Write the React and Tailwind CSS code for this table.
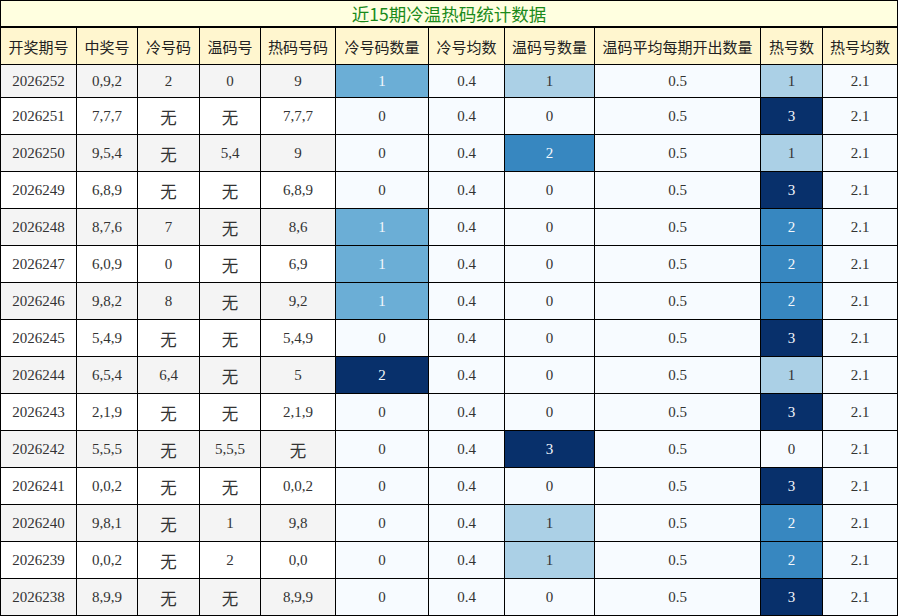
import React from "react";

const rows = [
  ["2026252", "0,9,2", "2", "0", "9", 1, 1, 1],
  ["2026251", "7,7,7", "无", "无", "7,7,7", 0, 0, 3],
  ["2026250", "9,5,4", "无", "5,4", "9", 0, 2, 1],
  ["2026249", "6,8,9", "无", "无", "6,8,9", 0, 0, 3],
  ["2026248", "8,7,6", "7", "无", "8,6", 1, 0, 2],
  ["2026247", "6,0,9", "0", "无", "6,9", 1, 0, 2],
  ["2026246", "9,8,2", "8", "无", "9,2", 1, 0, 2],
  ["2026245", "5,4,9", "无", "无", "5,4,9", 0, 0, 3],
  ["2026244", "6,5,4", "6,4", "无", "5", 2, 0, 1],
  ["2026243", "2,1,9", "无", "无", "2,1,9", 0, 0, 3],
  ["2026242", "5,5,5", "无", "5,5,5", "无", 0, 3, 0],
  ["2026241", "0,0,2", "无", "无", "0,0,2", 0, 0, 3],
  ["2026240", "9,8,1", "无", "1", "9,8", 0, 1, 2],
  ["2026239", "0,0,2", "无", "2", "0,0", 0, 1, 2],
  ["2026238", "8,9,9", "无", "无", "8,9,9", 0, 0, 3],
];

const headers = [
  "开奖期号",
  "中奖号",
  "冷号码",
  "温码号",
  "热码号码",
  "冷号码数量",
  "冷号均数",
  "温码号数量",
  "温码平均每期开出数量",
  "热号数",
  "热号均数",
];

const coldMap = {
  0: "bg-[#f7fbff] text-[#333]",
  1: "bg-[#6baed6] text-[#f4f8fc]",
  2: "bg-[#08306b] text-[#f4f8fc]",
};

const warmMap = {
  0: "bg-[#f7fbff] text-[#333]",
  1: "bg-[#abd0e6] text-[#333]",
  2: "bg-[#3787c0] text-[#f4f8fc]",
  3: "bg-[#08306b] text-[#f4f8fc]",
};

const serif = "font-['Liberation_Serif','Noto_Sans_CJK_SC',serif]";

function Cell({ children, className }) {
  return (
    <div className={`flex items-center justify-center ${serif} text-[15px] ${className}`}>
      {children}
    </div>
  );
}

function Txt({ v }) {
  if (v === "无") {
    return <span className="font-['Noto_Sans_CJK_SC',sans-serif] text-[16.5px] text-[#333] leading-none mt-[3px]">无</span>;
  }
  return <span>{v}</span>;
}

export default function App() {
  return (
    <div className="w-[898px] h-[616px] bg-white">
      <div className="grid grid-cols-[75px_60px_61px_60px_74px_92px_75px_89px_165px_61px_74px] gap-px bg-black p-px w-[898px]">
        <div className="col-span-11 h-[26px] border-b border-black bg-[#ffffe0] flex items-center justify-center font-['Noto_Sans_CJK_SC',sans-serif] text-[17.5px] text-[#1a8a1a] leading-none">
          近15期冷温热码统计数据
        </div>
        {headers.map((h) => (
          <div
            key={h}
            className="h-[36px] bg-[#fff6cf] flex items-center justify-center font-['Noto_Sans_CJK_SC',sans-serif] text-[15px] text-[#222] leading-none"
          >
            {h}
          </div>
        ))}
        {rows.map((r, i) => {
          const h = i === 0 ? "h-[32px]" : "h-[36px]";
          const base = i % 2 === 0 ? "bg-[#f4f4f4]" : "bg-white";
          return (
            <React.Fragment key={r[0]}>
              <Cell className={`${h} ${base} text-[#333]`}><Txt v={r[0]} /></Cell>
              <Cell className={`${h} ${base} text-[#333]`}><Txt v={r[1]} /></Cell>
              <Cell className={`${h} ${base} text-[#333]`}><Txt v={r[2]} /></Cell>
              <Cell className={`${h} ${base} text-[#333]`}><Txt v={r[3]} /></Cell>
              <Cell className={`${h} ${base} text-[#333]`}><Txt v={r[4]} /></Cell>
              <Cell className={`${h} ${coldMap[r[5]]}`}>{r[5]}</Cell>
              <Cell className={`${h} bg-[#f7fbff] text-[#333]`}>0.4</Cell>
              <Cell className={`${h} ${warmMap[r[6]]}`}>{r[6]}</Cell>
              <Cell className={`${h} bg-[#f7fbff] text-[#333]`}>0.5</Cell>
              <Cell className={`${h} ${warmMap[r[7]]}`}>{r[7]}</Cell>
              <Cell className={`${h} bg-[#f7fbff] text-[#333]`}>2.1</Cell>
            </React.Fragment>
          );
        })}
      </div>
    </div>
  );
}
